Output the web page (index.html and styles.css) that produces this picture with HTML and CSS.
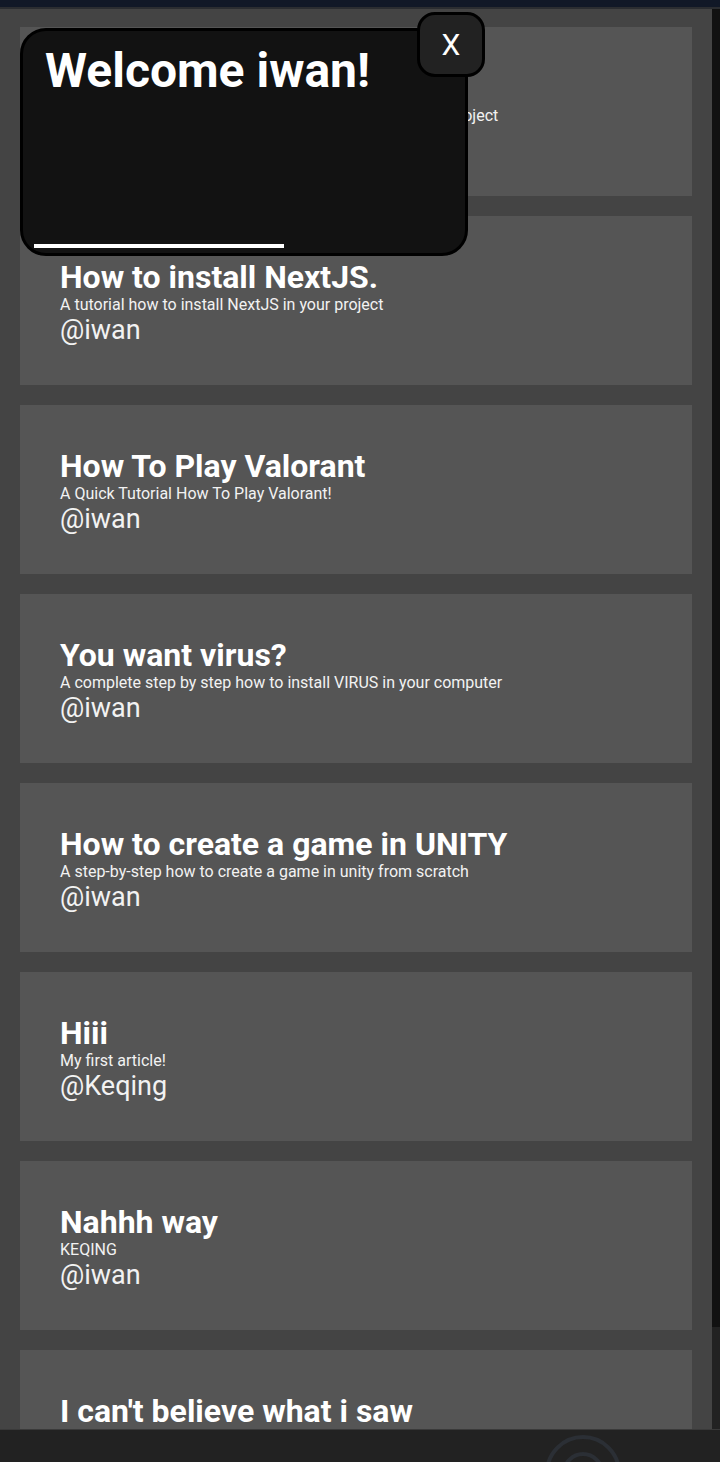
FILE: index.html
```html
<!DOCTYPE html>
<html lang="en">
<head>
<meta charset="utf-8">
<title>Articles</title>
<link rel="stylesheet" href="styles.css">
</head>
<body>
<div class="topbar"></div>
<div class="frame">
  <main class="feed">
    <article class="card">
      <h2 class="card-title">Getting started</h2>
      <p class="card-desc">A simple guide how to install and setup NextJS in your project</p>
      <p class="card-author">@iwan</p>
    </article>
    <article class="card">
      <h2 class="card-title">How to install NextJS.</h2>
      <p class="card-desc">A tutorial how to install NextJS in your project</p>
      <p class="card-author">@iwan</p>
    </article>
    <article class="card">
      <h2 class="card-title">How To Play Valorant</h2>
      <p class="card-desc">A Quick Tutorial How To Play Valorant!</p>
      <p class="card-author">@iwan</p>
    </article>
    <article class="card">
      <h2 class="card-title">You want virus?</h2>
      <p class="card-desc">A complete step by step how to install VIRUS in your computer</p>
      <p class="card-author">@iwan</p>
    </article>
    <article class="card">
      <h2 class="card-title">How to create a game in UNITY</h2>
      <p class="card-desc">A step-by-step how to create a game in unity from scratch</p>
      <p class="card-author">@iwan</p>
    </article>
    <article class="card">
      <h2 class="card-title">Hiii</h2>
      <p class="card-desc">My first article!</p>
      <p class="card-author">@Keqing</p>
    </article>
    <article class="card">
      <h2 class="card-title">Nahhh way</h2>
      <p class="card-desc">KEQING</p>
      <p class="card-author">@iwan</p>
    </article>
    <article class="card">
      <h2 class="card-title">I can't believe what i saw</h2>
      <p class="card-desc">You will not believe this</p>
      <p class="card-author">@iwan</p>
    </article>
  </main>
  <div class="track"><div class="thumb"></div></div>

  <div class="toast">
    <h1 class="toast-title">Welcome iwan!</h1>
    <div class="toast-progress"></div>
    <button class="toast-close">X</button>
  </div>
</div>
<nav class="bottombar">
  <svg class="nav-icon" width="90" height="33" viewBox="0 0 90 33">
    <circle cx="45" cy="43" r="36" fill="none" stroke="#2b2f35" stroke-width="4"/>
    <circle cx="45" cy="43" r="19" fill="none" stroke="#2b2f35" stroke-width="4"/>
  </svg>
</nav>
</body>
</html>
```

FILE: styles.css
```css
* { box-sizing: border-box; }
html, body {
  margin: 0;
  padding: 0;
  background: #222222;
  font-family: Roboto, "Liberation Sans", sans-serif;
  color: #ffffff;
}
.topbar {
  height: 9px;
  background: #111827;
  border-bottom: 2px solid #2b2d31;
}
.frame {
  position: relative;
  display: flex;
  height: 1420px;
}
.feed {
  width: 712px;
  height: 1420px;
  overflow: hidden;
  background: #444444;
  padding: 18px 20px 0 20px;
  display: flex;
  flex-direction: column;
  gap: 20px;
}
.card {
  flex: 0 0 169px;
  background: #555555;
  padding: 3px 40px 0 40px;
  display: flex;
  flex-direction: column;
  justify-content: center;
}
.card-title {
  margin: 0;
  font-size: 32px;
  font-weight: 700;
  line-height: 36px;
  white-space: nowrap;
}
.card-desc {
  margin: 0;
  font-size: 16px;
  line-height: 19px;
  color: #f2f2f2;
  white-space: nowrap;
}
.card-author {
  margin: 0;
  font-size: 27px;
  line-height: 32px;
  color: #f2f2f2;
}
.track {
  width: 8px;
  display: flex;
  flex-direction: column;
  background: #222222;
}
.thumb {
  height: 1318px;
  background: #111111;
}
.toast {
  position: absolute;
  left: 20px;
  top: 19px;
  width: 448px;
  height: 228px;
  background: #121212;
  border: 3px solid #000000;
  border-radius: 26px;
}
.toast-title {
  margin: 0;
  padding: 12px 0 0 22px;
  font-size: 48px;
  font-weight: 700;
  line-height: 56px;
}
.toast-progress {
  position: absolute;
  left: 11px;
  bottom: 5px;
  width: 250px;
  height: 4px;
  background: #ffffff;
}
.toast-close {
  position: absolute;
  left: 394px;
  top: -19px;
  width: 68px;
  height: 65px;
  background: #222222;
  border: 3px solid #000000;
  border-radius: 18px;
  color: #ffffff;
  font-family: Roboto, "Liberation Sans", sans-serif;
  font-size: 30px;
  font-weight: 400;
  padding: 0;
  display: flex;
  align-items: center;
  justify-content: center;
}
.bottombar {
  height: 33px;
  background: #222222;
  border-top: 1px solid #3a3a3a;
  position: relative;
  overflow: hidden;
}
.nav-icon {
  position: absolute;
  left: 538px;
  top: 0;
}
```
